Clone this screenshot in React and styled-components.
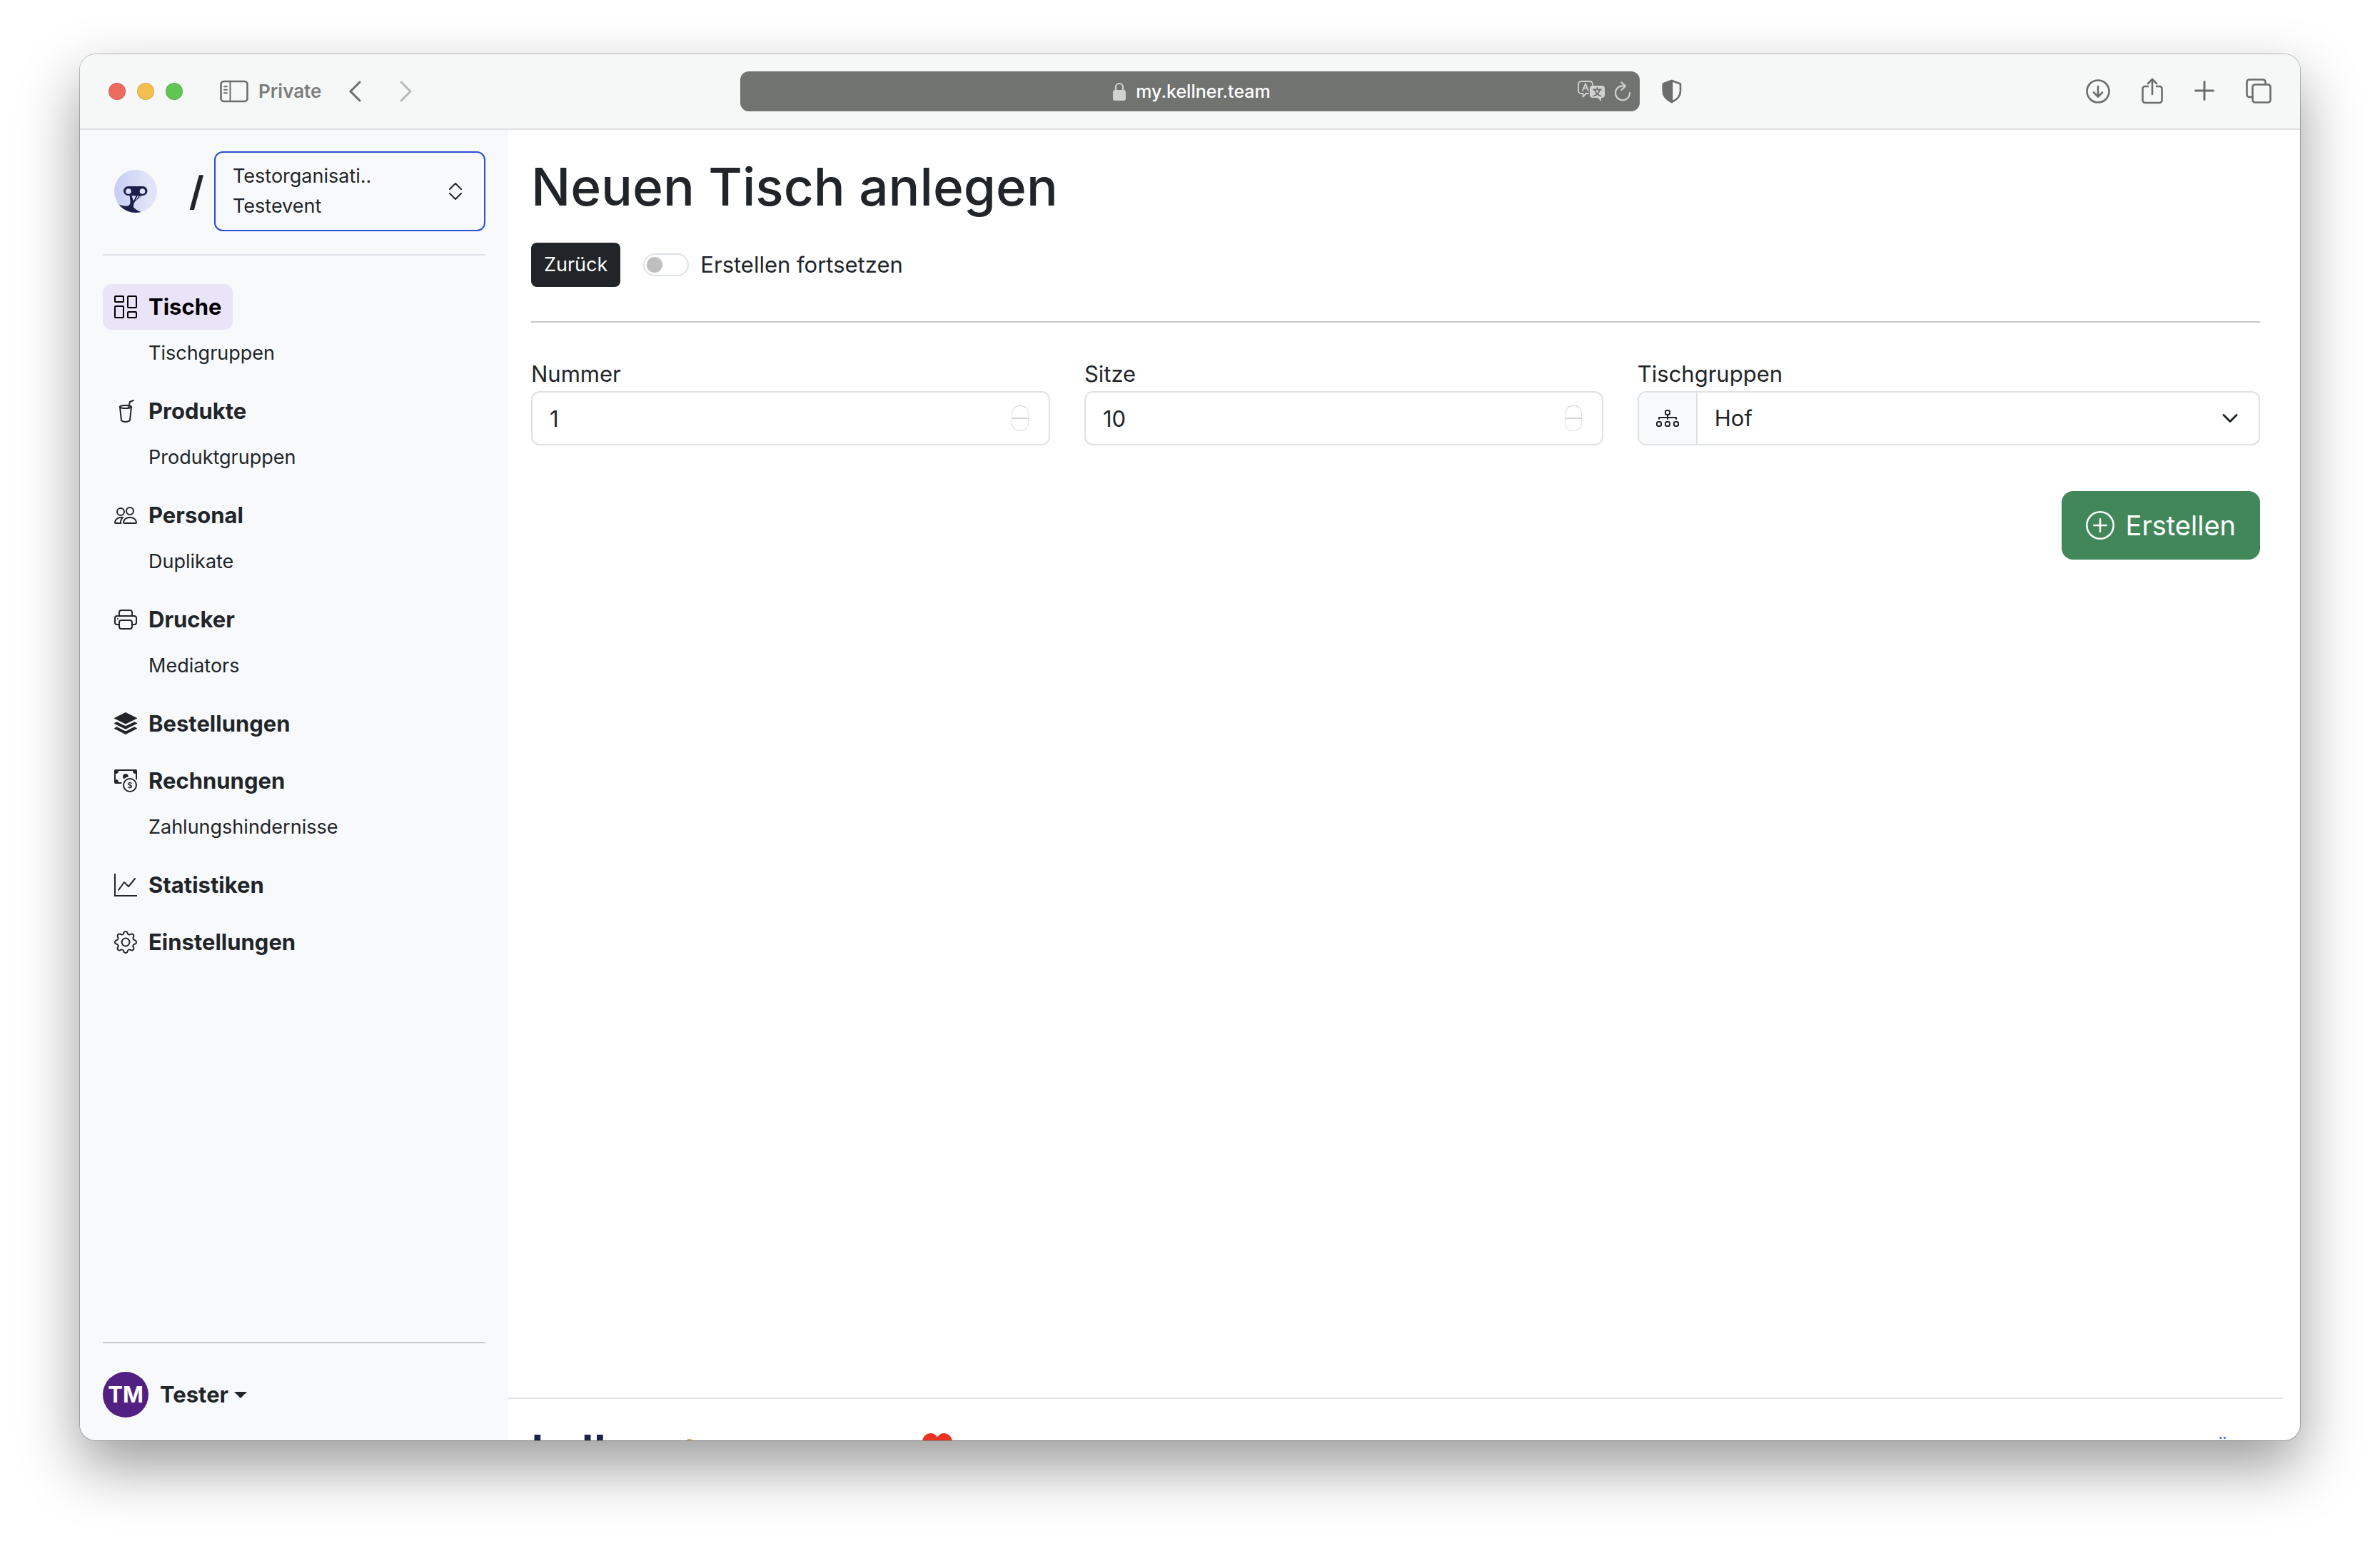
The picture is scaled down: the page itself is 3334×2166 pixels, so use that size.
import React, { useState } from 'react';
import styled, { createGlobalStyle, css } from 'styled-components';
import {
  BsCashCoin,
  BsChevronDown,
  BsChevronExpand,
  BsColumnsGap,
  BsCupStraw,
  BsDiagram3,
  BsGear,
  BsGraphUp,
  BsPeople,
  BsPlusCircle,
  BsPrinter,
  BsStack,
} from 'react-icons/bs';

const color = {
  text: '#212529',
  border: '#dee2e6',
  rule: '#c8c9ca',
  sidebar: '#f8f9fb',
  chrome: '#f6f8f7',
  chromeIcon: '#6b6d6b',
  active: '#e9e4f8',
  brand: '#2a4fd0',
  success: '#41875a',
};

const GlobalStyle = createGlobalStyle`
  *, *::before, *::after { box-sizing: border-box; }
  html, body, #root { height: 100%; }
  body {
    margin: 0;
    background: #fff;
    color: ${color.text};
    font: 400 31px/48px Inter, "Liberation Sans", sans-serif;
  }
  button, input, select { font: inherit; color: inherit; }
  button { border: 0; padding: 0; background: none; text-align: left; }
  a { color: inherit; text-decoration: none; }
  svg { display: block; flex: none; }
`;

const Desktop = styled.div`
  height: 100%;
  padding: 76px 112px 148px;
`;

const Window = styled.div`
  height: 100%;
  display: flex;
  flex-direction: column;
  overflow: hidden;
  border-radius: 22px;
  background: #fff;
  box-shadow: 0 0 0 1px rgba(0, 0, 0, 0.24), 0 36px 84px rgba(0, 0, 0, 0.4);
`;

/* Browser chrome */

const Toolbar = styled.header`
  flex: none;
  height: 106px;
  display: flex;
  align-items: center;
  padding: 0 40px;
  background: ${color.chrome};
  border-bottom: 2px solid #dfe1e0;
  color: ${color.chromeIcon};
`;

const ToolbarSide = styled.div`
  flex: 1 1 0;
  display: flex;
  align-items: center;
`;

const Lights = styled.div`
  display: flex;
  gap: 16px;
  margin-right: 52px;
`;

const Light = styled.span`
  width: 24px;
  height: 24px;
  border-radius: 50%;
  background: ${(p) => p.$fill};
  border: 1px solid rgba(0, 0, 0, 0.1);
`;

const PrivateLabel = styled.span`
  margin: 0 38px 0 14px;
  font-size: 26px;
  font-weight: 600;
  color: #7b7d7b;
`;

const ChromeButton = styled.button`
  color: ${(p) => (p.$dim ? '#b8bab8' : color.chromeIcon)};
`;

const BackForward = styled.div`
  display: flex;
  gap: 54px;
`;

const AddressBar = styled.div`
  flex: 0 1 1260px;
  height: 56px;
  display: flex;
  align-items: center;
  padding: 0 12px;
  border-radius: 12px;
  background: #717371;
  color: #d0d1d0;
`;

const AddressCenter = styled.div`
  flex: 1;
  display: flex;
  align-items: center;
  justify-content: center;
  gap: 14px;
  padding-left: 80px;
`;

const Host = styled.span`
  font-size: 25px;
  font-weight: 500;
  color: #fff;
`;

const AddressActions = styled.div`
  display: flex;
  align-items: center;
  gap: 12px;
`;

const ShieldSlot = styled.span`
  margin-left: 30px;
`;

const ToolbarActions = styled.div`
  display: flex;
  align-items: center;
  gap: 44px;
  margin-left: auto;
`;

/* Page layout */

const Body = styled.div`
  flex: 1;
  min-height: 0;
  display: flex;
`;

const Sidebar = styled.aside`
  flex: 0 0 600px;
  display: flex;
  flex-direction: column;
  padding: 30px 32px 32px;
  background: ${color.sidebar};
`;

const SidebarHeader = styled.div`
  display: flex;
  align-items: center;
  padding-left: 16px;
`;

const Slash = styled.span`
  flex: 1;
  padding-right: 14px;
  font-size: 56px;
  line-height: 56px;
  font-weight: 600;
  text-align: right;
`;

const OrgButton = styled.button`
  width: 380px;
  display: flex;
  align-items: center;
  justify-content: space-between;
  padding: 12px 24px;
  border: 2px solid ${color.brand};
  border-radius: 12px;
  font-size: 27px;
  line-height: 42px;
`;

const OrgLine = styled.span`
  display: block;
`;

const Rule = styled.hr`
  width: 100%;
  margin: ${(p) => p.$margin};
  border: 0;
  border-top: 2px solid ${(p) => (p.$light ? '#dfe1e8' : color.rule)};
`;

const Nav = styled.nav`
  flex: 1;
  display: flex;
  flex-direction: column;
  gap: 16px;
`;

const NavGroup = styled.div`
  display: flex;
  flex-direction: column;
  align-items: flex-start;
`;

const NavItem = styled.a`
  display: flex;
  align-items: center;
  gap: 16px;
  padding: 8px 16px;
  border-radius: 12px;
  font-weight: 700;
  ${(p) =>
    p.$active &&
    css`
      background: ${color.active};
      color: #000;
    `}
`;

const NavSubItem = styled.a`
  padding: 12px 16px 12px 64px;
  font-size: 27px;
  line-height: 42px;
`;

const UserButton = styled.button`
  display: flex;
  align-items: center;
  gap: 16px;
  font-weight: 700;
`;

const Avatar = styled.span`
  width: 64px;
  height: 64px;
  display: flex;
  align-items: center;
  justify-content: center;
  border-radius: 50%;
  background: #521f82;
  color: #fff;
`;

const UserName = styled.span`
  display: flex;
  align-items: center;
  gap: 8px;
`;

const Caret = styled.span`
  border: 9px solid transparent;
  border-top-color: currentColor;
  border-bottom: 0;
`;

const Main = styled.main`
  flex: 1;
  min-width: 0;
  margin-right: 24px;
  overflow: hidden;
`;

const Page = styled.div`
  min-height: calc(100% - 60px);
  padding: 32px;
`;

const Title = styled.h1`
  margin: 0 0 30px;
  font-size: 73px;
  line-height: 96px;
  font-weight: 500;
`;

const Actions = styled.div`
  display: flex;
  align-items: center;
  gap: 32px;
`;

const BackButton = styled.button`
  padding: 10px 18px;
  border-radius: 8px;
  background: ${color.text};
  color: #fff;
  font-size: 27px;
  line-height: 42px;
`;

const SwitchLabel = styled.label`
  display: flex;
  align-items: center;
  gap: 16px;
`;

const Switch = styled.input`
  appearance: none;
  width: 64px;
  height: 32px;
  margin: 0;
  padding: 3px;
  border: 2px solid ${color.border};
  border-radius: 16px;
  background: #fff;

  &::before {
    content: '';
    display: block;
    width: 22px;
    height: 22px;
    border-radius: 50%;
    background: #bfbfbf;
  }

  &:checked::before {
    margin-left: auto;
    background: ${color.brand};
  }
`;

const FormGrid = styled.div`
  display: grid;
  grid-template-columns: 5fr 5fr 6fr;
  gap: 48px;
`;

const Field = styled.div`
  display: flex;
  flex-direction: column;
`;

const ControlBox = styled.div`
  height: 76px;
  display: flex;
  align-items: center;
  overflow: hidden;
  border: 2px solid ${color.border};
  border-radius: 12px;
  background: #fff;
  padding-right: ${(p) => (p.$stepper ? '28px' : '0')};
`;

const NumberInput = styled.input`
  flex: 1;
  min-width: 0;
  height: 72px;
  padding: 0 24px;
  border: 0;
  outline: 0;
  background: transparent;
  appearance: textfield;

  &::-webkit-inner-spin-button {
    appearance: none;
    margin: 0;
  }
`;

const Stepper = styled.div`
  width: 24px;
  height: 36px;
  display: flex;
  flex-direction: column;
  border: 1px solid #e2e2e2;
  border-top-color: #cfcfcf;
  border-radius: 11px;
  overflow: hidden;
`;

const StepButton = styled.button`
  flex: 1;

  & + & {
    border-top: 2px solid #d4d4d4;
  }
`;

const AddOn = styled.span`
  align-self: stretch;
  display: flex;
  align-items: center;
  padding: 0 24px;
  background: ${color.sidebar};
  border-right: 2px solid ${color.border};
`;

const SelectWrap = styled.div`
  flex: 1;
  display: grid;
  align-items: center;

  & > * {
    grid-area: 1 / 1;
  }

  & > svg {
    justify-self: end;
    margin-right: 28px;
    pointer-events: none;
  }
`;

const Select = styled.select`
  appearance: none;
  width: 100%;
  height: 72px;
  padding: 0 24px;
  border: 0;
  outline: 0;
  background: transparent;
`;

const SubmitRow = styled.div`
  display: flex;
  justify-content: flex-end;
  margin-top: 64px;
`;

const SubmitButton = styled.button`
  display: flex;
  align-items: center;
  gap: 16px;
  padding: 18px 34px;
  border-radius: 16px;
  background: ${color.success};
  color: #fff;
  font-size: 38px;
  line-height: 60px;
`;

const Footer = styled.footer`
  display: flex;
  align-items: flex-start;
  padding: 32px;
  border-top: 2px solid ${color.border};
`;

const Brand = styled.a`
  flex: 0 0 548px;
  font: 700 58px/80px "Noto Sans", sans-serif;
  color: #1b2148;
`;

const BrandAccent = styled.span`
  color: #f0a050;
`;

const HeartSlot = styled.span`
  padding-top: 16px;
`;

const FooterLink = styled.a`
  margin-left: auto;
  padding-top: 16px;
  font-size: 27px;
  line-height: 42px;
  color: #3b6ff5;
`;

/* Drawings */

const stroke = {
  fill: 'none',
  stroke: 'currentColor',
  strokeWidth: 2.6,
  strokeLinecap: 'round',
  strokeLinejoin: 'round',
};

const SidebarIcon = () => (
  <svg width="40" height="32" viewBox="0 0 40 32" {...stroke}>
    <rect x="1.5" y="2" width="37" height="28" rx="4" />
    <path d="M14.5 2v28M6 9.3h4M6 13.8h4M6 18.3h4" strokeWidth="2" />
  </svg>
);

const ChevronIcon = ({ flip }) => (
  <svg width="18" height="32" viewBox="0 0 18 32" {...stroke} strokeWidth="3">
    <path d={flip ? 'M2 3l13 13L2 29' : 'M16 3L3 16l13 13'} />
  </svg>
);

const LockIcon = () => (
  <svg width="18" height="28" viewBox="0 0 18 28" fill="currentColor">
    <rect x="0" y="12" width="18" height="15" rx="3" />
    <path d="M4 13V8a5 5 0 0 1 10 0v5" fill="none" stroke="currentColor" strokeWidth="2.2" />
  </svg>
);

const TranslateIcon = () => (
  <svg width="39" height="32" viewBox="0 0 39 32" {...stroke} strokeWidth="1.8">
    <path d="M15 19h-3l-4.5 4.5V19H5a4 4 0 0 1-4-4V6a4 4 0 0 1 4-4h12a4 4 0 0 1 4 4v1" />
    <path d="M7 15l4-10 4 10M8.4 11.5h5.2" />
    <path
      d="M21 8h13a4 4 0 0 1 4 4v9a4 4 0 0 1-4 4h-1v5l-5-5h-7a4 4 0 0 1-4-4v-9a4 4 0 0 1 4-4z"
      fill="currentColor"
      stroke="none"
    />
    <path d="M22 13.5h11M27.5 11v2.5M31 14c-1 4-4 7-8.5 8.5M24 14c1 4 4 7 8.5 8.5" stroke="#717371" />
  </svg>
);

const ReloadIcon = () => (
  <svg width="24" height="30" viewBox="0 0 24 30" {...stroke} strokeWidth="2.2">
    <path d="M14 7.5A10 10 0 1 0 22 17" />
    <path d="M10.5 2.5l5.5 5-5.5 5.5" />
  </svg>
);

const ShieldIcon = () => (
  <svg width="30" height="34" viewBox="0 0 30 34" {...stroke}>
    <path d="M15 2L27 6.5V17c0 7-5 11.5-12 15C8 28.5 3 24 3 17V6.5z" />
    <path d="M15 2v30C8 28.5 3 24 3 17V6.5z" fill="currentColor" />
  </svg>
);

const DownloadIcon = () => (
  <svg width="34" height="36" viewBox="0 0 34 36" {...stroke}>
    <circle cx="17" cy="18" r="15.5" />
    <path d="M17 11v14M11 19.5l6 6 6-6" />
  </svg>
);

const ShareIcon = () => (
  <svg width="30" height="38" viewBox="0 0 30 38" {...stroke}>
    <path
      d="M10 12H5a3.5 3.5 0 0 0-3.5 3.5v16A3.5 3.5 0 0 0 5 35h20a3.5 3.5 0 0 0 3.5-3.5v-16A3.5 3.5 0 0 0 25 12h-5"
      strokeLinecap="butt"
    />
    <path d="M15 23V2M9 8l6-6 6 6" />
  </svg>
);

const PlusIcon = () => (
  <svg width="28" height="36" viewBox="0 0 28 36" {...stroke} strokeWidth="3">
    <path d="M14 4.5v25M1.5 17h25" />
  </svg>
);

const TabsIcon = () => (
  <svg width="36" height="36" viewBox="0 0 36 36" {...stroke}>
    <path d="M9.5 26H5a3.5 3.5 0 0 1-3.5-3.5V5A3.5 3.5 0 0 1 5 1.5h19A3.5 3.5 0 0 1 27.5 5v3" />
    <rect x="9.5" y="8.5" width="25" height="25" rx="3.5" />
  </svg>
);

const KellnerLogo = () => (
  <svg width="60" height="60" viewBox="0 0 60 60" role="img" aria-label="kellner.team">
    <defs>
      <linearGradient id="logo-sky" x1="0" y1="0.3" x2="1" y2="0.3">
        <stop offset="0.1" stopColor="#c8d0f4" />
        <stop offset="0.8" stopColor="#e1e4f8" />
      </linearGradient>
      <clipPath id="logo-disc">
        <circle cx="30" cy="30" r="30" />
      </clipPath>
    </defs>
    <circle cx="30" cy="30" r="30" fill="url(#logo-sky)" />
    <g clipPath="url(#logo-disc)" fill="#1b2148">
      <rect x="13" y="23" width="33.5" height="13" rx="6.5" />
      <path d="M21.500 35l1 9c0 4-1 6-4 6.500-4 .5-8-.5-12.500-2V62h34v-2c-5-2-11-4.500-13-8 0-4 .5-6 3-8.500 3-2.500 6.500-5 9.500-8.500z" />
      <path d="M24.500 36.300h6l-2 4.700-1.500 2.500z" fill="#d8ddf7" />
      <path d="M32.500 36.300h1.800l-3 5.500-1.300 1zM36 36.300h1.600l-5 5.200z" fill="#d8ddf7" />
    </g>
    <circle cx="20" cy="30" r="3.8" fill="#dfe3fa" />
    <circle cx="39.5" cy="30" r="3.8" fill="#dfe3fa" />
  </svg>
);

const HeartIcon = () => (
  <svg width="42" height="40" viewBox="0 0 42 40" fill="#ea3323">
    <path d="M21 5.5C19 2 15.5 0 12 0 5 0 0 5.5 0 12.500 0 24 12 33 21 40c9-7 21-16 21-27.500C42 5.500 37 0 30 0c-3.500 0-7 2-9 5.500z" />
  </svg>
);

const navigation = [
  { label: 'Tische', icon: BsColumnsGap, active: true, sub: 'Tischgruppen' },
  { label: 'Produkte', icon: BsCupStraw, sub: 'Produktgruppen' },
  { label: 'Personal', icon: BsPeople, sub: 'Duplikate' },
  { label: 'Drucker', icon: BsPrinter, sub: 'Mediators' },
  { label: 'Bestellungen', icon: BsStack },
  { label: 'Rechnungen', icon: BsCashCoin, sub: 'Zahlungshindernisse' },
  { label: 'Statistiken', icon: BsGraphUp },
  { label: 'Einstellungen', icon: BsGear },
];

function NumberField({ id, label, initial }) {
  const [value, setValue] = useState(initial);
  return (
    <Field>
      <label htmlFor={id}>{label}</label>
      <ControlBox $stepper>
        <NumberInput id={id} type="number" value={value} onChange={(e) => setValue(Number(e.target.value))} />
        <Stepper>
          <StepButton type="button" aria-label={`${label} erhöhen`} onClick={() => setValue(value + 1)} />
          <StepButton type="button" aria-label={`${label} verringern`} onClick={() => setValue(value - 1)} />
        </Stepper>
      </ControlBox>
    </Field>
  );
}

function BrowserToolbar() {
  return (
    <Toolbar>
      <ToolbarSide>
        <Lights>
          <Light $fill="#ec6a5e" />
          <Light $fill="#f4bf4f" />
          <Light $fill="#61c554" />
        </Lights>
        <ChromeButton aria-label="Seitenleiste"><SidebarIcon /></ChromeButton>
        <PrivateLabel>Private</PrivateLabel>
        <BackForward>
          <ChromeButton aria-label="Zurück"><ChevronIcon /></ChromeButton>
          <ChromeButton $dim aria-label="Vorwärts"><ChevronIcon flip /></ChromeButton>
        </BackForward>
      </ToolbarSide>
      <AddressBar>
        <AddressCenter>
          <LockIcon />
          <Host>my.kellner.team</Host>
        </AddressCenter>
        <AddressActions>
          <TranslateIcon />
          <ReloadIcon />
        </AddressActions>
      </AddressBar>
      <ToolbarSide>
        <ShieldSlot><ShieldIcon /></ShieldSlot>
        <ToolbarActions>
          <ChromeButton aria-label="Downloads"><DownloadIcon /></ChromeButton>
          <ChromeButton aria-label="Teilen"><ShareIcon /></ChromeButton>
          <ChromeButton aria-label="Neuer Tab"><PlusIcon /></ChromeButton>
          <ChromeButton aria-label="Tabübersicht"><TabsIcon /></ChromeButton>
        </ToolbarActions>
      </ToolbarSide>
    </Toolbar>
  );
}

export default function App() {
  const [keepCreating, setKeepCreating] = useState(false);

  return (
    <Desktop>
      <GlobalStyle />
      <Window>
        <BrowserToolbar />
        <Body>
          <Sidebar>
            <SidebarHeader>
              <KellnerLogo />
              <Slash>/</Slash>
              <OrgButton type="button">
                <span>
                  <OrgLine>Testorganisati..</OrgLine>
                  <OrgLine>Testevent</OrgLine>
                </span>
                <BsChevronExpand size={32} />
              </OrgButton>
            </SidebarHeader>
            <Rule $light $margin="32px 0 40px" />
            <Nav>
              {navigation.map(({ label, icon: Icon, active, sub }) => (
                <NavGroup key={label}>
                  <NavItem href="#" $active={active}>
                    <Icon size={32} />
                    {label}
                  </NavItem>
                  {sub && <NavSubItem href="#">{sub}</NavSubItem>}
                </NavGroup>
              ))}
            </Nav>
            <Rule $margin="32px 0 40px" />
            <UserButton type="button">
              <Avatar>TM</Avatar>
              <UserName>
                Tester
                <Caret />
              </UserName>
            </UserButton>
          </Sidebar>
          <Main>
            <Page>
              <Title>Neuen Tisch anlegen</Title>
              <Actions>
                <BackButton type="button">Zurück</BackButton>
                <SwitchLabel>
                  <Switch
                    type="checkbox"
                    role="switch"
                    checked={keepCreating}
                    onChange={(e) => setKeepCreating(e.target.checked)}
                  />
                  Erstellen fortsetzen
                </SwitchLabel>
              </Actions>
              <Rule $margin="48px 0" />
              <form onSubmit={(e) => e.preventDefault()}>
                <FormGrid>
                  <NumberField id="nummer" label="Nummer" initial={1} />
                  <NumberField id="sitze" label="Sitze" initial={10} />
                  <Field>
                    <label htmlFor="gruppe">Tischgruppen</label>
                    <ControlBox>
                      <AddOn><BsDiagram3 size={32} /></AddOn>
                      <SelectWrap>
                        <Select id="gruppe" defaultValue="Hof">
                          <option>Hof</option>
                        </Select>
                        <BsChevronDown size={24} strokeWidth={1} />
                      </SelectWrap>
                    </ControlBox>
                  </Field>
                </FormGrid>
                <SubmitRow>
                  <SubmitButton type="submit">
                    <BsPlusCircle size={40} />
                    Erstellen
                  </SubmitButton>
                </SubmitRow>
              </form>
            </Page>
            <Footer>
              <Brand href="#">
                kellner.<BrandAccent>team</BrandAccent>
              </Brand>
              <HeartSlot><HeartIcon /></HeartSlot>
              <FooterLink href="#">Über</FooterLink>
            </Footer>
          </Main>
        </Body>
      </Window>
    </Desktop>
  );
}
